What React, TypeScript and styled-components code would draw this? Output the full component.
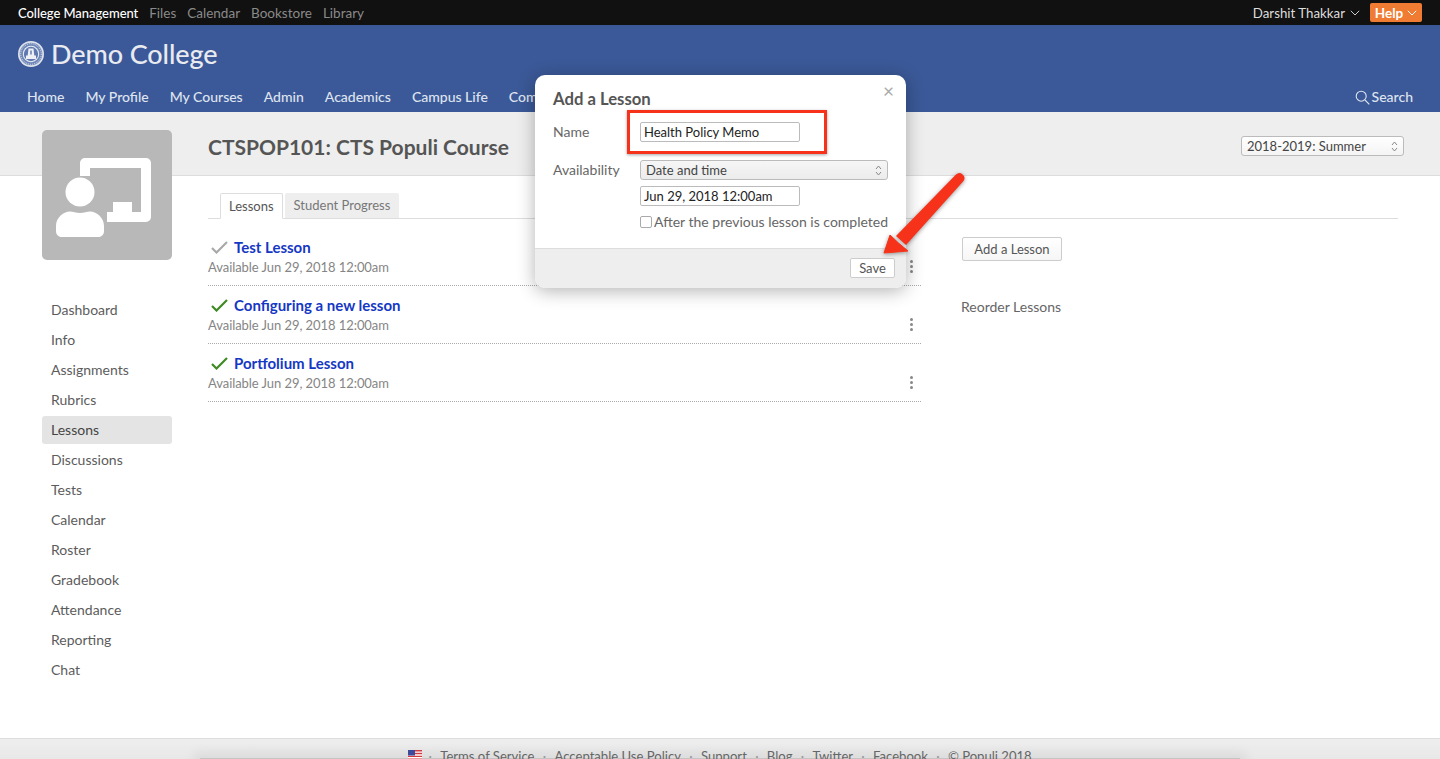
import React from "react";
import styled, { createGlobalStyle } from "styled-components";

const Global = createGlobalStyle`
  html, body { margin: 0; padding: 0; height: 100%; overflow: hidden; background: #fff; }
  body { font-family: Lato, "Liberation Sans", sans-serif; color: #555; -webkit-font-smoothing: antialiased; }
  * { box-sizing: border-box; }
`;

const Page = styled.div`
  position: relative;
  width: 1440px;
  height: 759px;
  overflow: hidden;
  display: flex;
  flex-direction: column;
`;

const TopBar = styled.div`
  flex: 0 0 25px;
  background: #111;
  display: flex;
  align-items: center;
  justify-content: space-between;
  padding: 0 18px;
`;
const TopLinks = styled.div`
  display: flex;
  gap: 11px;
`;
const TopLink = styled.span<{ $on?: boolean }>`
  color: ${(p) => (p.$on ? "#fff" : "#8a8a8a")};
  font-weight: ${(p) => (p.$on ? 500 : 400)};
  font-size: ${(p) => (p.$on ? "13px" : "13.5px")};
  letter-spacing: ${(p) => (p.$on ? "-0.05px" : "0")};
`;
const UserArea = styled.div`
  display: flex;
  align-items: center;
  gap: 10px;
`;
const UserName = styled.span`
  display: flex;
  align-items: center;
  gap: 5px;
  color: #ddd;
  font-size: 13.3px;
`;
const HelpBtn = styled.span`
  display: flex;
  align-items: center;
  justify-content: center;
  gap: 4px;
  width: 52px;
  height: 19px;
  background: #f07c34;
  color: #fff;
  border-radius: 2px;
  font-size: 13.5px;
  font-weight: 700;
`;

const Header = styled.div`
  flex: 0 0 87px;
  background: #3b5998;
  display: flex;
  flex-direction: column;
  justify-content: space-between;
`;
const Brand = styled.div`
  display: flex;
  align-items: center;
  gap: 7px;
  padding: 12px 0 0 18px;
  color: #e9ebf0;
  font-size: 27px;
  font-weight: 500;
  line-height: 34px;
  letter-spacing: -0.1px;
`;
const NavRow = styled.div`
  display: flex;
  justify-content: space-between;
  padding: 0 27px 6px 27px;
  font-size: 14px;
  line-height: 18px;
  color: #dfe4ef;
`;
const NavItems = styled.div`
  display: flex;
  gap: 21px;
`;
const NavItem = styled.span`
  font-weight: 500;
`;
const SearchLink = styled.span`
  display: flex;
  align-items: center;
  gap: 2px;
  font-weight: 500;
`;

const Band = styled.div`
  flex: 0 0 64px;
  background: #eee;
  border-bottom: 1px solid #ddd;
  display: flex;
  align-items: center;
  justify-content: space-between;
  padding: 5px 36px 0 208px;
`;
const Title = styled.h1`
  margin: 0;
  font-size: 21px;
  font-weight: 700;
  color: #555;
`;
const TermSelect = styled.div`
  width: 163px;
  height: 20px;
  background: linear-gradient(#fff, #f4f4f4);
  border: 1px solid #bbb;
  border-radius: 3px;
  font-size: 13px;
  line-height: 18px;
  padding: 0 5px;
  color: #444;
  display: flex;
  align-items: center;
  justify-content: space-between;
`;

const Body = styled.div`
  flex: 0 0 562px;
  display: flex;
  padding-left: 42px;
`;
const Sidebar = styled.aside`
  width: 130px;
  margin-top: -46px;
  position: relative;
  flex: none;
`;
const Avatar = styled.div`
  width: 130px;
  height: 130px;
  background: #b8b8b8;
  border-radius: 5px;
  margin-bottom: 36px;
  svg { display: block; }
`;
const SideList = styled.div`
  display: flex;
  flex-direction: column;
`;
const SideItem = styled.div<{ $on?: boolean }>`
  height: 28px;
  margin-bottom: 2px;
  padding: 0 0 2px 9px;
  display: flex;
  align-items: center;
  font-size: 14px;
  color: ${(p) => (p.$on ? "#444" : "#5c5c5c")};
  border-radius: 3px;
  background: ${(p) => (p.$on ? "#e4e4e4" : "transparent")};
`;

const Content = styled.div`
  margin-left: 36px;
  width: 1190px;
  padding-top: 17px;
`;
const Tabs = styled.div`
  display: flex;
  align-items: flex-end;
  gap: 2px;
  height: 26px;
  padding-left: 12px;
  border-bottom: 1px solid #ddd;
`;
const Tab = styled.div<{ $on?: boolean }>`
  height: ${(p) => (p.$on ? "26px" : "25px")};
  margin-bottom: ${(p) => (p.$on ? "-1px" : "0")};
  padding: ${(p) => (p.$on ? "0 8px" : "0 8.5px 1px 9px")};
  display: flex;
  align-items: center;
  font-size: 13px;
  border-radius: 2px 2px 0 0;
  color: ${(p) => (p.$on ? "#555" : "#777")};
  background: ${(p) => (p.$on ? "#fff" : "#eee")};
  border: ${(p) => (p.$on ? "1px solid #ddd" : "none")};
  border-bottom: ${(p) => (p.$on ? "1px solid #fff" : "none")};
`;
const Columns = styled.div`
  display: flex;
  gap: 40px;
`;
const Lessons = styled.div`
  width: 713px;
  padding-top: 9px;
`;
const LessonRow = styled.div`
  height: 58px;
  border-bottom: 1px dotted #aaa;
  display: flex;
  justify-content: space-between;
  align-items: flex-end;
  padding-bottom: 9px;
`;
const LessonText = styled.div`
  display: flex;
  flex-direction: column;
`;
const LessonTitle = styled.div`
  display: flex;
  align-items: center;
  gap: 6px;
  padding-left: 3px;
  height: 20px;
  margin-bottom: 1px;
  font-size: 15px;
  font-weight: 700;
  color: #1538c4;
`;
const Avail = styled.div`
  font-size: 13px;
  line-height: 18px;
  letter-spacing: -0.06px;
  color: #858585;
`;
const Dots = styled.div`
  display: flex;
  flex-direction: column;
  gap: 2px;
  margin-right: 8px;
  margin-bottom: 3px;
  i { width: 3px; height: 3px; border-radius: 50%; background: #888; display: block; }
`;
const Aside = styled.div`
  padding-top: 18px;
  display: flex;
  flex-direction: column;
  align-items: flex-start;
`;
const AddBtn = styled.div`
  margin-left: 1px;
  width: 100px;
  height: 24px;
  background: linear-gradient(#fff, #f6f6f6);
  border: 1px solid #ccc;
  border-radius: 2px;
  display: flex;
  align-items: center;
  justify-content: center;
  font-size: 13px;
  color: #555;
`;
const Reorder = styled.div`
  margin-top: 37px;
  font-size: 14px;
  line-height: 18px;
  color: #666;
`;

const Footer = styled.div`
  position: relative;
  flex: 0 0 40px;
  background: linear-gradient(#eee, #e2e2e2);
  border-top: 1px solid #ddd;
  display: flex;
  justify-content: center;
  gap: 8.300px;
  padding-top: 8px;
  font-size: 13.100px;
  line-height: 18px;
  color: #666;
`;
const FootShade = styled.div`
  position: absolute;
  left: 200px;
  width: 1040px;
  top: 19px;
  height: 3px;
  background: #c4c4c4;
  box-shadow: 0 0 12px 6px rgba(0, 0, 0, 0.06);
`;
const FootDot = styled.span`
  color: #999;
  position: relative;
`;
const FlagWrap = styled.span`
  position: relative;
  padding-top: 3px;
  line-height: 0;
  margin-right: -2px;
`;
const FootText = styled.span`
  position: relative;
`;

const Modal = styled.div`
  position: absolute;
  left: 535px;
  top: 75px;
  width: 371px;
  height: 213px;
  background: #fff;
  border-radius: 10px;
  box-shadow: 0 3px 18px rgba(0, 0, 0, 0.3);
  display: flex;
  flex-direction: column;
  overflow: hidden;
  z-index: 5;
`;
const ModalBody = styled.div`
  flex: 1;
  min-height: 0;
  padding: 13px 18px 0 18px;
  position: relative;
`;
const Close = styled.span`
  position: absolute;
  top: 6px;
  right: 12px;
  font-size: 19px;
  line-height: 20px;
  color: #aaa;
`;
const ModalTitle = styled.h2`
  margin: 0 0 12px;
  font-size: 16.700px;
  line-height: 22px;
  font-weight: 700;
  color: #555;
`;
const FormRow = styled.div`
  display: flex;
  align-items: flex-start;
  & + & { margin-top: 18px; }
`;
const FieldLabel = styled.div`
  width: 87px;
  flex: none;
  font-size: 14px;
  line-height: 20px;
  color: #666;
`;
const FieldStack = styled.div`
  display: flex;
  flex-direction: column;
  gap: 6px;
  width: 248px;
`;
const TextBox = styled.div`
  width: 160px;
  height: 20px;
  border: 1px solid #bbb;
  border-radius: 2px;
  background: #fff;
  padding-left: 3px;
  font-size: 13px;
  line-height: 18px;
  color: #222;
`;
const SelectBox = styled.div`
  width: 248px;
  height: 20px;
  border: 1px solid #bbb;
  border-radius: 3px;
  background: linear-gradient(#f6f6f6, #ececec);
  padding: 0 5px;
  font-size: 13px;
  line-height: 18px;
  color: #444;
  display: flex;
  align-items: center;
  justify-content: space-between;
`;
const CheckRow = styled.div`
  display: flex;
  align-items: center;
  gap: 2px;
  font-size: 14px;
  line-height: 20px;
  color: #666;
  white-space: nowrap;
`;
const CheckBox = styled.span`
  width: 12px;
  height: 12px;
  border: 1px solid #aaa;
  border-radius: 2px;
  background: #fff;
  flex: none;
`;
const ModalFoot = styled.div`
  flex: 0 0 40px;
  background: #eee;
  border-top: 1px solid #ddd;
  display: flex;
  justify-content: flex-end;
  align-items: flex-start;
  padding: 9px 11px 0 0;
`;
const SaveBtn = styled.div`
  width: 45px;
  height: 20px;
  background: #fff;
  border: 1px solid #ccc;
  border-radius: 2px;
  display: flex;
  align-items: center;
  justify-content: center;
  font-size: 13px;
  color: #555;
`;
const RedBox = styled.div`
  position: absolute;
  left: 627px;
  top: 110px;
  width: 200px;
  height: 44px;
  border: 3px solid #f7321a;
  box-shadow: 0 1px 3px rgba(0, 0, 0, 0.35);
  z-index: 6;
  pointer-events: none;
`;
const ArrowSvg = styled.svg`
  position: absolute;
  left: 875px;
  top: 165px;
  z-index: 7;
  filter: drop-shadow(0 1px 2px rgba(0, 0, 0, 0.4));
`;

const Chevron = ({ c = "#ccc" }: { c?: string }) => (
  <svg width="10" height="6" viewBox="0 0 10 6" fill="none" stroke={c} strokeWidth="1">
    <path d="M.8.800l4.200 4.200L9.200.800" />
  </svg>
);
const UpDown = () => (
  <svg width="7" height="11" viewBox="0 0 7 11" fill="none" stroke="#888" strokeWidth="1">
    <path d="M1 4l2.500-3L6 4M1 7l2.500 3L6 7" />
  </svg>
);
const Check = ({ c }: { c: string }) => (
  <svg width="17" height="13" viewBox="0 0 17 13" fill="none" stroke={c} strokeWidth="2.200">
    <path d="M1 7l4.500 4.500L16 1" />
  </svg>
);
const Seal = () => (
  <svg width="26" height="26" viewBox="0 0 26 26">
    <circle cx="13" cy="13" r="13" fill="#dfe3ec" />
    <circle cx="13" cy="13" r="11.300" fill="#6f87b8" />
    <circle cx="13" cy="13" r="10.300" fill="none" stroke="#e6e9f1" strokeWidth="1" strokeDasharray="1 1" />
    <circle cx="13" cy="13" r="8.200" fill="#eef0f5" />
    <circle cx="13" cy="13" r="7.200" fill="#5f79b0" />
    <path d="M10.500 7.500h5l.8 7h1.700v3.500H8v-3.500h1.700z" fill="#eef0f5" />
    <path d="M12 9.500h2v4h-2z" fill="#8a9cc4" />
  </svg>
);
const Teacher = () => (
  <svg width="130" height="130" viewBox="0 0 130 130" fill="#fff">
    <path d="M38 33a5 5 0 0 1 5-5h61a5 5 0 0 1 5 5v54a5 5 0 0 1-5 5H65V82h6V72h19v10h9V38H48v8H38z" />
    <circle cx="38" cy="62" r="14.500" />
    <path d="M14 96c0-8 7-14.500 14-14.500 3 0 6 1.500 10 1.500s7-1.500 10-1.500c7 0 14 6.500 14 14.500v5c0 4-3 6-6 6H20c-3 0-6-2-6-6z" />
  </svg>
);
const Flag = () => (
  <svg width="14" height="10" viewBox="0 0 14 10">
    <rect width="14" height="10" fill="#fff" />
    <path d="M0 0h14v1.400H0zM0 2.800h14v1.400H0zM0 5.700h14v1.400H0zM0 8.600h14V10H0z" fill="#d23a40" />
    <rect width="7" height="5.500" fill="#3c4a9c" />
  </svg>
);

const sideItems = ["Dashboard", "Info", "Assignments", "Rubrics", "Lessons", "Discussions", "Tests", "Calendar", "Roster", "Gradebook", "Attendance", "Reporting", "Chat"];
const lessons = [
  { t: "Test Lesson", c: "#a9a9a9" },
  { t: "Configuring a new lesson", c: "#3f8a24" },
  { t: "Portfolium Lesson", c: "#3f8a24" },
];
const footerLinks = ["Terms of Service", "Acceptable Use Policy", "Support", "Blog", "Twitter", "Facebook", "© Populi 2018"];

export default function App() {
  return (
    <Page>
      <Global />
      <TopBar>
        <TopLinks>
          <TopLink $on>College Management</TopLink>
          <TopLink>Files</TopLink>
          <TopLink>Calendar</TopLink>
          <TopLink>Bookstore</TopLink>
          <TopLink>Library</TopLink>
        </TopLinks>
        <UserArea>
          <UserName>Darshit Thakkar <Chevron /></UserName>
          <HelpBtn>Help <Chevron c="#fff" /></HelpBtn>
        </UserArea>
      </TopBar>
      <Header>
        <Brand><Seal />Demo College</Brand>
        <NavRow>
          <NavItems>
            {["Home", "My Profile", "My Courses", "Admin", "Academics", "Campus Life", "Communications"].map((n) => (
              <NavItem key={n}>{n}</NavItem>
            ))}
          </NavItems>
          <SearchLink>
            <svg width="15" height="15" viewBox="0 0 15 15" fill="none" stroke="#dfe4ef" strokeWidth="1.100">
              <circle cx="6.200" cy="6.200" r="5" />
              <path d="M10 10l4.300 4.300" />
            </svg>
            Search
          </SearchLink>
        </NavRow>
      </Header>
      <Band>
        <Title>CTSPOP101: CTS Populi Course</Title>
        <TermSelect>2018-2019: Summer <UpDown /></TermSelect>
      </Band>
      <Body>
        <Sidebar>
          <Avatar><Teacher /></Avatar>
          <SideList>
            {sideItems.map((s) => (
              <SideItem key={s} $on={s === "Lessons"}>{s}</SideItem>
            ))}
          </SideList>
        </Sidebar>
        <Content>
          <Tabs>
            <Tab $on>Lessons</Tab>
            <Tab>Student Progress</Tab>
          </Tabs>
          <Columns>
            <Lessons>
              {lessons.map((l) => (
                <LessonRow key={l.t}>
                  <LessonText>
                    <LessonTitle><Check c={l.c} />{l.t}</LessonTitle>
                    <Avail>Available Jun 29, 2018 12:00am</Avail>
                  </LessonText>
                  <Dots><i /><i /><i /></Dots>
                </LessonRow>
              ))}
            </Lessons>
            <Aside>
              <AddBtn>Add a Lesson</AddBtn>
              <Reorder>Reorder Lessons</Reorder>
            </Aside>
          </Columns>
        </Content>
      </Body>
      <Footer>
        <FootShade />
        <FlagWrap><Flag /></FlagWrap>
        {footerLinks.map((f) => (
          <React.Fragment key={f}>
            <FootDot>·</FootDot>
            <FootText>{f}</FootText>
          </React.Fragment>
        ))}
      </Footer>

      <Modal>
        <ModalBody>
          <Close>×</Close>
          <ModalTitle>Add a Lesson</ModalTitle>
          <FormRow>
            <FieldLabel>Name</FieldLabel>
            <FieldStack><TextBox>Health Policy Memo</TextBox></FieldStack>
          </FormRow>
          <FormRow>
            <FieldLabel>Availability</FieldLabel>
            <FieldStack>
              <SelectBox>Date and time <UpDown /></SelectBox>
              <TextBox>Jun 29, 2018 12:00am</TextBox>
              <CheckRow><CheckBox />After the previous lesson is completed</CheckRow>
            </FieldStack>
          </FormRow>
        </ModalBody>
        <ModalFoot><SaveBtn>Save</SaveBtn></ModalFoot>
      </Modal>
      <RedBox />
      <ArrowSvg width="100" height="100" viewBox="0 0 100 100">
        <path d="M81 9.500a5 5 0 0 1 7.500 6.500L31 80L21 71z" fill="#f7321a" />
        <path d="M9 88L15 70Q23 78 33 86z" fill="#f7321a" stroke="#f7321a" strokeWidth="1" strokeLinejoin="round" />
      </ArrowSvg>
    </Page>
  );
}
